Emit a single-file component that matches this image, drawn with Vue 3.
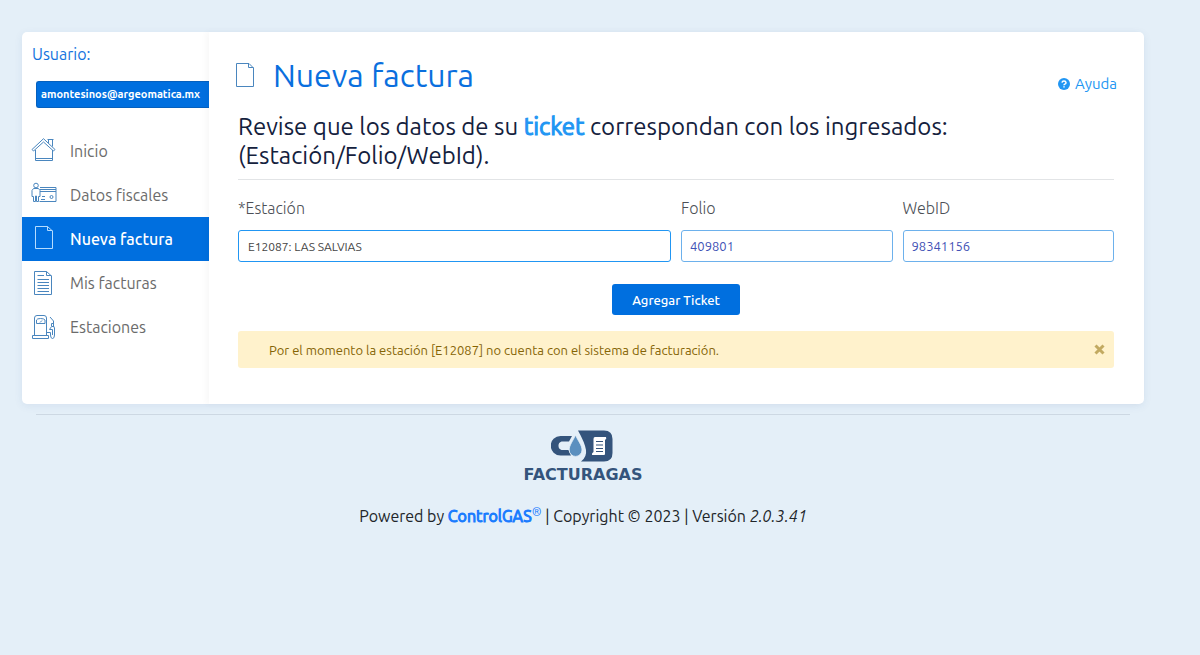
<script setup>
import { ref } from 'vue'

const menu = [
  { id: 'home', label: 'Inicio' },
  { id: 'fiscal', label: 'Datos fiscales' },
  { id: 'new', label: 'Nueva factura', active: true },
  { id: 'list', label: 'Mis facturas' },
  { id: 'pump', label: 'Estaciones' }
]
const station = ref('E12087: LAS SALVIAS')
const folio = ref('409801')
const webId = ref('98341156')
const alertOpen = ref(true)
</script>

<template>
  <div class="page">
    <div class="card">
      <aside class="sidebar">
        <p class="user-title">Usuario:</p>
        <div class="user-row"><span class="user-badge">amontesinos@argeomatica.mx</span></div>
        <nav class="menu">
          <a v-for="item in menu" :key="item.id" href="#" class="menu-item" :class="{ active: item.active }">
            <svg class="menu-icon" viewBox="0 0 26 26" aria-hidden="true">
              <g v-if="item.id === 'home'">
                <path d="M1 11.500 12.500 .700 24 11.500 22.500 13 12.500 4 2.500 13Z" />
                <path d="M4.500 12V22.500H21.500V12M4.500 20.500H21.500M17.500 5V1.500H21.500V8.500M16.500 1.500H22.500" />
              </g>
              <g v-else-if="item.id === 'fiscal'">
                <circle cx="5" cy="3.500" r="2.300" />
                <path d="M2.500 6.500H7.500L9 8.500V14.500H7.500V19.500H5.500V14H4.500V19.500H2.500V14.500H1V8.500ZM9 5.500H25V19.500H8.500M9 7.500H25M9 9.500H25M11 14.500H14M10 17.500H14" />
                <circle cx="20.500" cy="15" r="1.500" />
              </g>
              <g v-else-if="item.id === 'new'">
                <path d="M4.500 .500H16.500L21.500 5V22.500H4.500ZM16.500 .500V4.500H21.500" />
              </g>
              <g v-else-if="item.id === 'list'">
                <path d="M3.500 1.500H15.500L20.500 6V24.500H3.500ZM15.500 1.500V5.500H20.500M6.500 5.500H13M6.500 9.500H18M6.500 12.500H18M6.500 15.500H18M6.500 18.500H18M6.500 21.500H18" />
              </g>
              <g v-else>
                <path d="M3.500 21.500V4Q3.500 1.500 6 1.500H13Q15.500 1.500 15.500 4V21.500M1.500 24.500V21.500H17.500V24.500ZM5.500 9.500V6Q6 4.500 9.500 4.500T14 6V9.500ZM9 8.500 11 6.500M19 3 22.500 7V12L23.500 14V21Q23.500 24.500 21.500 24.500T19.500 21V18.500H16M22.500 9.500H20.500V12.500L18.500 15.500H21.500V21M21 12.500H23" />
              </g>
            </svg>
            <span>{{ item.label }}</span>
          </a>
        </nav>
      </aside>

      <main class="main">
        <header class="heading">
          <svg class="heading-icon" viewBox="0 0 19 25" aria-hidden="true">
            <path d="M.500 .500H13L17.500 5V23.500H.500ZM12.500 .500V4.500H17.500" />
          </svg>
          <h1>Nueva factura</h1>
          <a href="#" class="help">
            <svg viewBox="0 0 12 12" aria-hidden="true">
              <circle cx="6" cy="6" r="6" />
              <path d="M4 4.600Q4.200 3 6 3T8 4.700Q8 5.600 6.800 6.100Q6 6.500 6 7.200M6 8.300V9.600" />
            </svg>
            <span>Ayuda</span>
          </a>
        </header>

        <h2>Revise que los datos de su <a href="#">ticket</a> correspondan con los ingresados: <br />(Estación/Folio/WebId).</h2>

        <form @submit.prevent>
          <div class="fields">
            <div class="field wide">
              <label for="station">*Estación</label>
              <input id="station" v-model="station" class="station" type="text" />
            </div>
            <div class="field">
              <label for="folio">Folio</label>
              <input id="folio" v-model="folio" type="text" />
            </div>
            <div class="field">
              <label for="webid">WebID</label>
              <input id="webid" v-model="webId" type="text" />
            </div>
          </div>
          <button class="submit" type="submit">Agregar Ticket</button>
        </form>

        <div v-if="alertOpen" class="alert" role="alert">
          <span>Por el momento la estación [E12087] no cuenta con el sistema de facturación.</span>
          <button class="close" type="button" aria-label="Cerrar" @click="alertOpen = false">
            <svg viewBox="0 0 11 11" aria-hidden="true"><path d="M1.500 1.500 9.500 9.500M9.500 1.500 1.500 9.500" /></svg>
          </button>
        </div>
      </main>
    </div>

    <footer class="footer">
      <div class="brand">
        <svg class="brand-mark" viewBox="0 0 64 34" aria-hidden="true">
          <path d="M21 6H9.500A9.500 9.500 0 0 0 9.500 25.500H20L17.500 20H10.500A4.500 4.500 0 0 1 10.500 11.500H18Z" fill="#34547c" />
          <path d="M24.500 5C27 11 31 15 31 20A6.300 6.300 0 0 1 18.200 20C18.200 15 22 11 24.500 5Z" fill="#5a8fbf" stroke="#e4eff8" stroke-width=".800" />
          <path d="M27 .500H53Q61.500 .500 61.500 9V23Q61.500 31.500 53 31.500H30Q36 27 35 20Q34 13 27 .500Z" fill="#34547c" />
          <path d="M44 7H55Q56 9 54 10V24Q54 25 53 25H41Q40.500 23 42.500 22V9Q42.500 7 44 7Z" fill="#fff" />
          <path d="M45 11.500H52M45 15H52M45 18.500H52M45 21.500H52" stroke="#34547c" stroke-width="1.200" />
        </svg>
        <span class="brand-name">FACTURAGAS</span>
      </div>
      <p>Powered by <a href="#">ControlGAS<sup>®</sup></a> | Copyright © 2023 | Versión <em>2.0.3.41</em></p>
    </footer>
  </div>
</template>

<style>
body {
  margin: 0;
  background: #e4eff8;
}
</style>

<style scoped>
.page {
  padding: 32px 56px 32px 22px;
  color: #212529;
  font: 16px/24px Ubuntu, "Noto Sans", sans-serif;
}
.page * {
  box-sizing: border-box;
}
a {
  text-decoration: none;
}
.card {
  display: grid;
  grid-template-columns: 187px minmax(0, 1fr);
  background: #fff;
  border-radius: 5px;
  box-shadow: 0 2px 8px rgba(40, 80, 140, 0.08);
}
.sidebar {
  overflow: hidden;
  padding-top: 10px;
}
.user-title {
  margin: 0 0 15px 10px;
  color: #1473de;
}
.user-row {
  padding-left: 14px;
  margin-bottom: 21px;
}
.user-badge {
  display: block;
  height: 27px;
  padding-left: 4px;
  border: 1px solid #0560be;
  border-right: 0;
  border-radius: 3px 0 0 3px;
  background: #006fdf;
  color: #fff;
  font-size: 11px;
  font-weight: 700;
  line-height: 25px;
  white-space: nowrap;
}
.menu-item {
  display: flex;
  align-items: center;
  gap: 13px;
  height: 44px;
  padding-left: 9px;
  color: #6b6b6b;
}
.menu-item.active {
  background: #006fdf;
  color: #fff;
  font-weight: 500;
}
.menu-icon {
  width: 26px;
  height: 26px;
  fill: none;
  stroke: #4a86be;
  stroke-width: 1;
}
.active .menu-icon {
  stroke: #b5dcff;
}
.main {
  padding: 23px 30px 36px 29px;
  box-shadow: -3px 0 6px rgba(0, 0, 0, 0.03);
  border-radius: 0 5px 5px 0;
}
.heading {
  display: flex;
  align-items: center;
  height: 40px;
}
.heading-icon {
  width: 19px;
  height: 25px;
  margin-left: -2px;
  fill: none;
  stroke: #4a86be;
}
h1 {
  margin: 0 0 0 18px;
  color: #0a6fde;
  font-size: 32px;
  font-weight: 400;
  line-height: 40px;
}
.help {
  display: flex;
  align-items: center;
  gap: 5px;
  margin: 17px -3px 0 auto;
  color: #2196f3;
  font-size: 15px;
}
.help svg {
  width: 12px;
  height: 12px;
  fill: #2196f3;
}
.help path {
  fill: none;
  stroke: #fff;
  stroke-width: 1.500;
}
h2 {
  margin: 17px 0 16px;
  padding-bottom: 9px;
  border-bottom: 1px solid #e2e4e6;
  color: #14213d;
  font-size: 24px;
  font-weight: 400;
  line-height: 29px;
}
h2 a {
  color: #2196f3;
  -webkit-text-stroke: 1px #2196f3;
}
.fields {
  display: grid;
  grid-template-columns: repeat(12, minmax(0, 1fr));
  gap: 10px;
}
.field {
  grid-column: span 3;
}
.field.wide {
  grid-column: span 6;
}
label {
  display: block;
  margin-bottom: 10px;
  color: #4c5056;
  font-weight: 300;
}
input {
  display: block;
  width: 100%;
  height: 32px;
  padding: 0 8px;
  border: 1px solid #6db1ec;
  border-radius: 3px;
  background: #fff;
  color: #3f51b5;
  font: 13px/20px Ubuntu, "Noto Sans", sans-serif;
}
input.station {
  padding: 0 9px;
  border-color: #2196f3;
  color: #444;
  font-size: 12px;
}
.submit {
  display: block;
  width: 128px;
  height: 31px;
  margin: 22px auto 16px;
  padding: 0;
  border: 0;
  border-radius: 3px;
  background: #006fdf;
  color: #fff;
  font: 500 13px/20px Ubuntu, "Noto Sans", sans-serif;
}
.alert {
  display: flex;
  align-items: center;
  justify-content: space-between;
  min-height: 37px;
  padding: 0 9px 0 31px;
  border-radius: 3px;
  background: #fff2cc;
  color: #856404;
  font-size: 13px;
}
.close {
  display: flex;
  padding: 0;
  border: 0;
  background: none;
}
.close svg {
  width: 11px;
  height: 11px;
  fill: none;
  stroke: #c2aa61;
  stroke-width: 3;
}
.footer {
  margin: 10px 14px 0;
  padding-top: 15px;
  border-top: 1px solid #cdd8e3;
  text-align: center;
}
.brand {
  display: flex;
  flex-direction: column;
  align-items: center;
}
.brand-mark {
  width: 64px;
  height: 34px;
}
.brand-name {
  margin-top: 3px;
  color: #34547c;
  font: bold 16px/16px "DejaVu Sans", sans-serif;
}
.footer p {
  margin: 21px 0 0;
}
.footer a {
  color: #197bff;
  -webkit-text-stroke: 1px #197bff;
}
sup {
  font-size: 12px;
  line-height: 0;
  -webkit-text-stroke: 0;
}
</style>
